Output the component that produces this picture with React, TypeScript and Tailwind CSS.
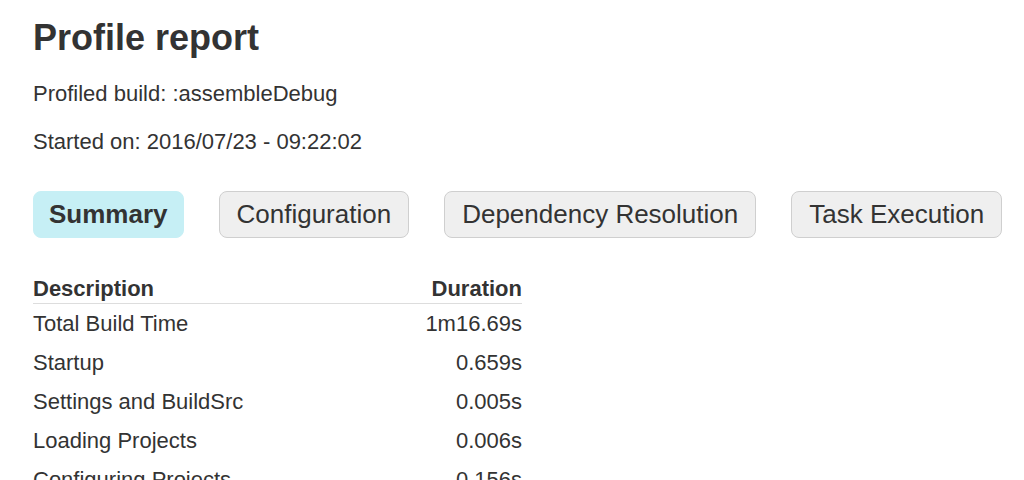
import React, { useState } from 'react';

interface TimingRow {
  description: string;
  duration: string;
}

const tabs = ['Summary', 'Configuration', 'Dependency Resolution', 'Task Execution'];

const summaryRows: TimingRow[] = [
  { description: 'Total Build Time', duration: '1m16.69s' },
  { description: 'Startup', duration: '0.659s' },
  { description: 'Settings and BuildSrc', duration: '0.005s' },
  { description: 'Loading Projects', duration: '0.006s' },
  { description: 'Configuring Projects', duration: '0.156s' },
];

const App: React.FC = () => {
  const [activeTab, setActiveTab] = useState('Summary');

  return (
    <div className="min-h-screen bg-white pl-[33px] text-[#333] font-['Liberation_Sans',Arial,sans-serif]">
      {/* Header */}
      <h1 className="pt-[18px] text-[36px] leading-[40px] font-bold">Profile report</h1>
      <p className="mt-[23px] text-[22px] leading-[26px]">Profiled build: :assembleDebug</p>
      <p className="mt-[22px] text-[22px] leading-[26px]">Started on: 2016/07/23 - 09:22:02</p>

      {/* Tabs */}
      <div className="mt-[36px] flex gap-[35px]">
        {tabs.map((tab) => (
          <button
            key={tab}
            onClick={() => setActiveTab(tab)}
            className={
              tab === activeTab
                ? 'h-[47px] rounded-[8px] border border-[#c6eff5] bg-[#c6eff5] px-[15px] text-[26px] leading-[45px] font-bold text-[#333]'
                : 'h-[47px] rounded-[8px] border border-[#cfcfcf] bg-[#efefef] px-[17px] text-[26px] leading-[45px] text-[#333]'
            }
          >
            {tab}
          </button>
        ))}
      </div>

      {/* Summary table */}
      <div className="mt-[38px] w-[489px] text-[22px]">
        <div className="flex h-[28px] items-start justify-between border-b border-[#ddd] leading-[26px] font-bold">
          <span>Description</span>
          <span>Duration</span>
        </div>
        {summaryRows.map((row) => (
          <div key={row.description} className="flex h-[39px] justify-between leading-[39px]">
            <span>{row.description}</span>
            <span>{row.duration}</span>
          </div>
        ))}
      </div>
    </div>
  );
};

export default App;
